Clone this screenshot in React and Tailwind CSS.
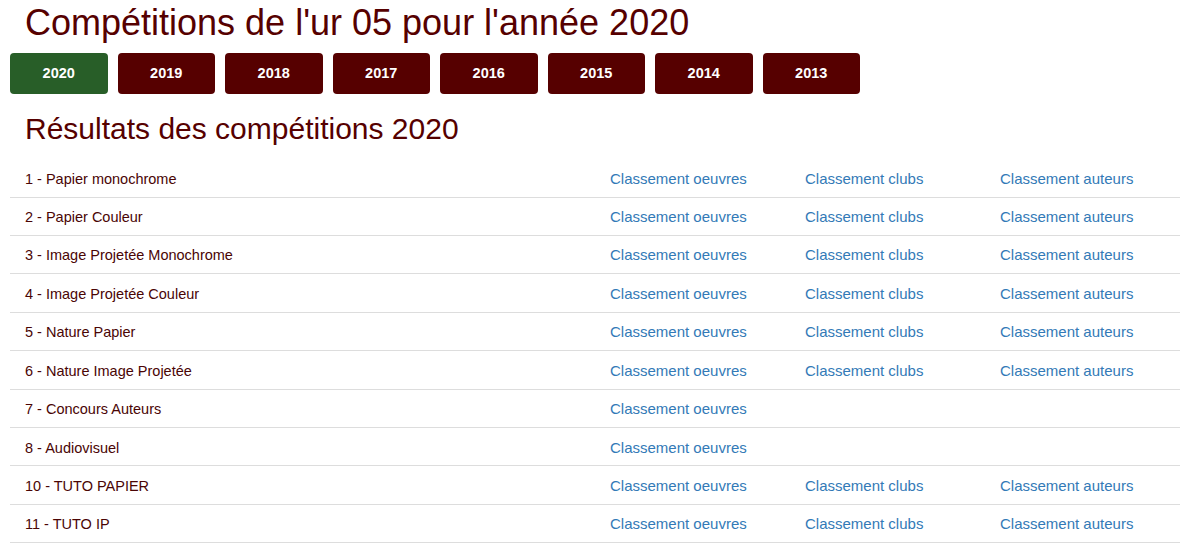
import React from "react";

const years = ["2020", "2019", "2018", "2017", "2016", "2015", "2014", "2013"];

const rows = [
  { name: "1 - Papier monochrome", full: true },
  { name: "2 - Papier Couleur", full: true },
  { name: "3 - Image Projetée Monochrome", full: true },
  { name: "4 - Image Projetée Couleur", full: true },
  { name: "5 - Nature Papier", full: true },
  { name: "6 - Nature Image Projetée", full: true },
  { name: "7 - Concours Auteurs", full: false },
  { name: "8 - Audiovisuel", full: false },
  { name: "10 - TUTO PAPIER", full: true },
  { name: "11 - TUTO IP", full: true },
];

export default function App() {
  return (
    <div className="w-[1200px] h-[560px] bg-white overflow-hidden font-['Liberation_Sans',Arial,sans-serif]">
      <div className="px-[10px]">
        <h1 className="pt-[3px] px-[15px] text-[36px] leading-[1.1] text-[#560000]">
          Compétitions de l'ur 05 pour l'année 2020
        </h1>
        <div className="flex gap-[10px] mt-[10.5px]">
          {years.map((y, i) => (
            <div
              key={y}
              className={
                "w-[97.5px] h-[41px] rounded-[4px] flex items-center justify-center text-white text-[14.5px] font-bold " +
                (i === 0 ? "bg-[#285e28]" : "bg-[#560000]")
              }
            >
              {y}
            </div>
          ))}
        </div>
        <h2 className="mt-[17.7px] px-[15px] text-[30px] leading-[1.1] text-[#560000]">
          Résultats des compétitions 2020
        </h2>
        <div className="mt-[14.3px] w-[1170px] text-[15px] leading-[21.43px]">
          {rows.map((r) => (
            <div key={r.name} className="h-[38.43px] pt-[8.5px] grid grid-cols-[585px_195px_195px_195px] items-baseline content-start border-b border-[#dddddd]">
              <div className="px-[15px] text-[14.5px] text-[#4a0505]">{r.name}</div>
              <div className="px-[15px] text-[#337ab7]">Classement oeuvres</div>
              <div className="px-[15px] text-[#337ab7]">{r.full ? "Classement clubs" : ""}</div>
              <div className="px-[15px] text-[#337ab7]">{r.full ? "Classement auteurs" : ""}</div>
            </div>
          ))}
        </div>
      </div>
    </div>
  );
}
